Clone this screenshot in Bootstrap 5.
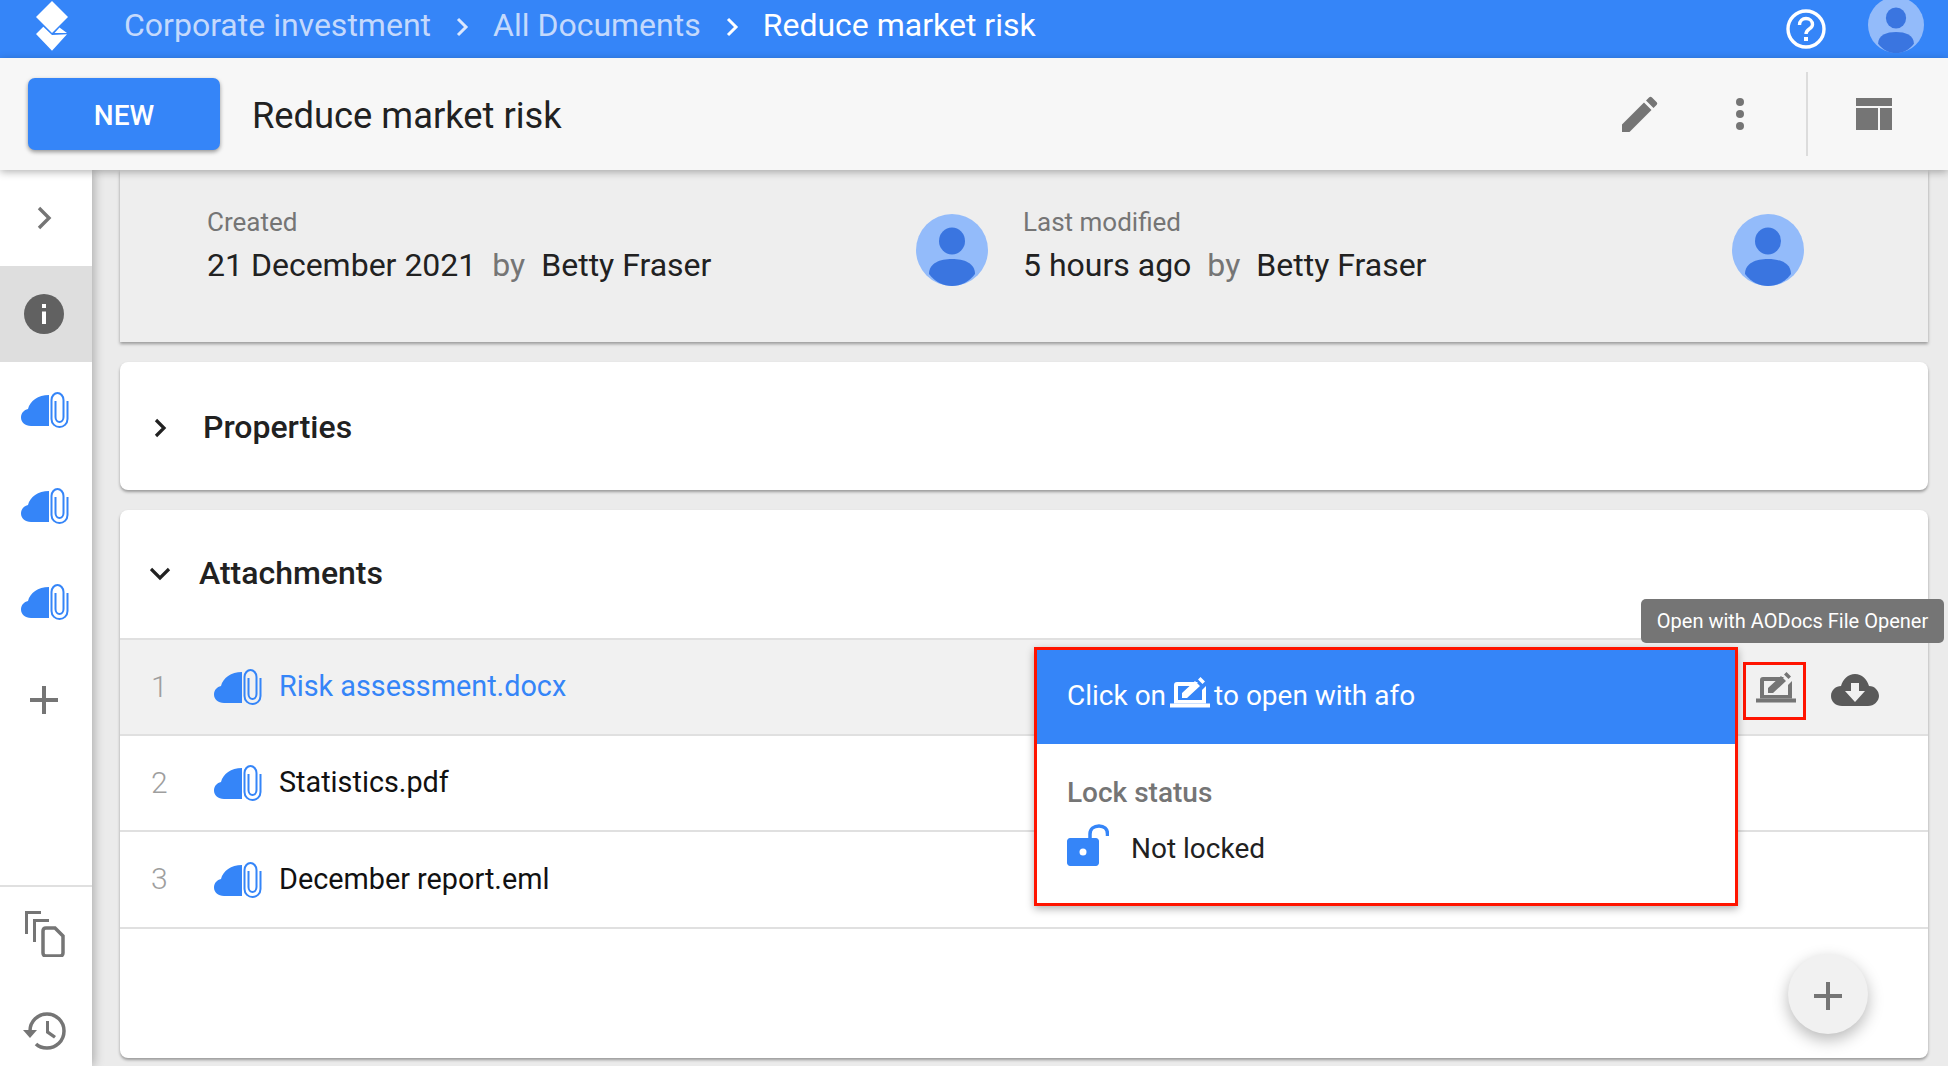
<!DOCTYPE html>
<html lang="en"><head><meta charset="utf-8"><title>Reduce market risk</title>
<link rel="stylesheet" href="https://cdn.jsdelivr.net/npm/bootstrap@5.3.0/dist/css/bootstrap.min.css">
<style>
html,body{height:100%;overflow:hidden}
body{font-family:Roboto,"Liberation Sans",sans-serif;background:#ebebeb;color:#212121}
.app-top{height:58px;background:#3585f8;color:#fff;font-size:32px;padding-left:35px}
.crumb-txt{margin-bottom:8px}
.crumb-dim{color:#c4d9fc}
.crumb-sep{width:14px;height:22px;margin:0 24px 5px 24px;flex:none}
.top-logo{width:34px;height:58px;margin-right:55px}
.top-help{width:40px;height:40px;margin-right:42px}
.top-user{width:56px;height:56px;margin-right:24px;margin-top:-8px}
.app-bar{height:112px;background:#f7f7f7;box-shadow:0 2px 8px rgba(0,0,0,.3);position:relative;z-index:3;padding-left:28px}
.new-btn{width:192px;height:72px;background:#3585f8;color:#fff;font-size:28px;font-weight:500;border:0;border-radius:7px;box-shadow:0 2px 4px rgba(0,0,0,.4);margin-right:32px;padding-top:10px}
.new-btn:hover{background:#3585f8;color:#fff}
.bar-title{font-size:36.300px;margin-top:4px}
.bar-ico{fill:#757575;flex:none}
.bar-sep{width:2px;height:84px;background:#dcdcdc;margin:0 48px 0 62px}
.app-side{width:92px;background:#fff;box-shadow:2px 0 10px rgba(0,0,0,.28);position:relative;z-index:2;flex:none}
.side-cell{height:96px;padding-right:4px}
.side-on{background:#dedede}
.side-top{height:96px;padding-right:2px}
.side-foot{border-top:2px solid #e0e0e0;height:181px;padding-right:2px}
.side-plus{margin-top:3px}
.app-main{padding:0 20px 0 28px;min-width:0}
.meta-card{height:172px;background:#eee;box-shadow:0 2px 3px rgba(0,0,0,.35);padding:0 0 0 87px;margin-bottom:20px}
.meta-cell{width:816px;position:relative;padding-top:35px}
.meta-label{font-size:26px;color:#757575;line-height:34px}
.meta-val{font-size:32px;line-height:42px;margin-top:5px}
.meta-by{color:#757575;margin:0 16px}
.meta-av{width:72px;height:72px;position:absolute;top:44px;left:709px}
.sheet{background:#fff;border-radius:8px;box-shadow:0 2px 3px rgba(0,0,0,.35)}
.props-sheet{height:128px;padding-left:34px;margin-bottom:20px}
.sheet-h{font-size:32px;font-weight:500}
.att-sheet{height:548px;position:relative}
.att-head{height:128px;padding-left:30px}
.att-row{height:96px;border-top:2px solid #e0e0e0;padding-left:31px;font-size:28.800px;color:#111}
.att-row.last-r{border-bottom:2px solid #e0e0e0;height:99px}
.att-on{background:#f1f1f1}
.att-num{width:62px;font-size:30px;font-weight:300;color:#9e9e9e;margin-bottom:2px}
.att-ico{width:49px;height:36px;margin-right:17px;flex:none}
.att-link{color:#3585f8}
.tip-box{position:absolute;left:1521px;top:89px;width:303px;height:44px;background:#757575;color:#fff;font-size:20px;border-radius:5px;z-index:5}
.pop-box{position:absolute;left:914px;top:137px;width:704px;height:259px;background:#fff;border:3px solid #ff1400;box-shadow:0 3px 8px rgba(0,0,0,.3);z-index:4}
.pop-head{height:94px;background:#3585f8;color:#fff;font-size:28px;padding:0 0 2px 30px}
.pop-ico{width:40px;height:32px;margin:-6px 4px 0;fill:#fff}
.pop-body{padding:31px 30px 0}
.pop-lab{font-size:28px;font-weight:500;color:#757575;line-height:36px}
.pop-val{font-size:28px;margin-top:17px;color:#212121}
.pop-lock{width:42px;height:42px;margin:-8px 22px 0 0}
.open-box{position:absolute;left:1623px;top:152px;width:63px;height:58px;border:3px solid #ff1400}
.open-ico{position:absolute;left:1636px;top:162px;width:40px;height:32px}
.down-ico{position:absolute;left:1711px;top:163px;width:48px;height:34px}
.fab-btn{position:absolute;left:1668px;top:444px;width:80px;height:80px;border-radius:50%;background:#f1f1f1;box-shadow:0 6px 16px rgba(0,0,0,.28)}
.fab-plus{margin-top:3px}
</style></head><body>
<svg width="0" height="0" class="position-absolute">
<symbol id="i-att" viewBox="0 0 49 36">
<path fill="#3585f8" d="M29 34H11C5 34 1 30 1 25.500C1 21 4 18 8 17C10 9 18 3 29 3Z"/>
<path fill="none" stroke="#3585f8" stroke-width="2" d="M47.500 9V27C47.500 32 43.500 35 39.500 35S31.500 32 31.500 27V8C31.500 4 34.500 1 37.500 1S43.500 4 43.500 8V25C43.500 28 41.500 30 39.500 30S35.500 28 35.500 25V9"/>
</symbol>
<symbol id="i-av" viewBox="0 0 72 72">
<circle cx="36" cy="36" r="36" fill="#93bbfa"/>
<ellipse cx="36" cy="27" rx="13" ry="13.500" fill="#3a75e0"/>
<path fill="#3a75e0" d="M13 60C13 49 24 45 36 45S59 49 59 60C53 68 45 72 36 72S19 68 13 60Z"/>
</symbol>
<symbol id="i-plus" viewBox="0 0 28 28"><path fill="#757575" d="M12 0h4v12h12v4H16v12h-4V16H0v-4h12z"/></symbol>
<symbol id="i-open" viewBox="0 0 40 32">
<path d="M0 26.500h40v4H0z"/>
<path d="M7 5H28L24 9H8V23H32V13L36 9V26.500H4V8C4 6 5 5 7 5Z"/>
<path d="M12 21v-5L25 4l5 5-13 12zM28 2.500 30.500 0 35 4.500 32.500 7z"/>
</symbol>
</svg>

<header class="app-top d-flex align-items-center">
<svg class="top-logo flex-none" viewBox="0 0 34 58"><path fill="#fff" d="M17 1 33 17 17 33 1 17ZM1 34 8.300 26.700 17 35 32 34.300 17 50.700ZM24.500 27.500 32 33H19.500Z"/></svg>
<span class="crumb-dim crumb-txt">Corporate investment</span>
<svg class="crumb-sep" viewBox="0 0 14 22"><path fill="none" stroke="#dbe8fe" stroke-width="3" d="M3 3l8 8-8 8"/></svg>
<span class="crumb-dim crumb-txt">All Documents</span>
<svg class="crumb-sep" viewBox="0 0 14 22"><path fill="none" stroke="#fff" stroke-width="3" d="M3 3l8 8-8 8"/></svg>
<span class="crumb-txt">Reduce market risk</span>
<span class="ms-auto d-flex align-items-center">
<svg class="top-help" viewBox="0 0 40 40"><circle cx="20" cy="20" r="18" fill="none" stroke="#fff" stroke-width="3.400"/><path fill="none" stroke="#fff" stroke-width="3.400" d="M13.500 16c0-4 3-6.500 6.500-6.500s6.500 2.500 6.500 6c0 4.500-6.500 4.500-6.500 9.500"/><path fill="#fff" d="M18 28h4v4h-4z"/></svg>
<svg class="top-user"><use href="#i-av"/></svg>
</span>
</header>

<div class="app-bar d-flex align-items-center">
<button class="btn new-btn" type="button">NEW</button>
<span class="bar-title">Reduce market risk</span>
<span class="ms-auto d-flex align-items-center">
<svg class="bar-ico" width="36" height="36" viewBox="0 0 36 36"><path d="M0 28.500 22 6.500l7.500 7.500L7.500 36H0zM24 4.500l3-3c1-1 2-1 3 0l4.500 4.500c1 1 1 2 0 3l-3 3z"/></svg>
<svg class="bar-ico" style="margin-left:78px" width="8" height="32" viewBox="0 0 8 32"><circle cx="4" cy="4" r="4"/><circle cx="4" cy="16" r="4"/><circle cx="4" cy="28" r="4"/></svg>
<span class="bar-sep"></span>
<svg class="bar-ico" style="margin-right:56px" width="36" height="32" viewBox="0 0 36 32"><path d="M0 0h36v8H0zM0 10h22v22H0zM24 10h12v22H24z"/></svg>
</span>
</div>

<div class="d-flex flex-grow-1" style="height:896px">
<aside class="app-side d-flex flex-column">
<div class="side-top d-flex align-items-center justify-content-center"><svg width="18" height="24" viewBox="0 0 18 24"><path fill="none" stroke="#757575" stroke-width="3.400" d="M3 2l10 10L3 22"/></svg></div>
<div class="side-cell side-on d-flex align-items-center justify-content-center"><svg width="40" height="40" viewBox="0 0 40 40"><circle cx="20" cy="20" r="20" fill="#616161"/><path fill="#fff" d="M18 17.500h4V30h-4zM18 10h4v4h-4z"/></svg></div>
<div class="side-cell d-flex align-items-center justify-content-center"><svg width="49" height="36"><use href="#i-att"/></svg></div>
<div class="side-cell d-flex align-items-center justify-content-center"><svg width="49" height="36"><use href="#i-att"/></svg></div>
<div class="side-cell d-flex align-items-center justify-content-center"><svg width="49" height="36"><use href="#i-att"/></svg></div>
<div class="side-cell d-flex align-items-center justify-content-center"><svg class="side-plus" width="28" height="28"><use href="#i-plus"/></svg></div>
<div class="side-foot mt-auto d-flex flex-column align-items-center">
<svg class="bar-ico" style="margin-top:24px" width="40" height="46" viewBox="0 0 40 46"><path d="M0 0h16v3H3v20H0z"/><path d="M8 8h16v3H11v20H8z"/><path fill="none" stroke="#757575" stroke-width="3.500" d="M18 20c0-2 1-3 3-3h9l8 8v17c0 2-1 3-3 3H21c-2 0-3-1-3-3z"/></svg>
<svg class="bar-ico" style="margin-top:55px" width="44" height="38" viewBox="0 0 44 38"><path fill="none" stroke="#757575" stroke-width="3.500" d="M7 19C7 9 15 2 24 2s17 7 17 17-8 17-17 17c-4 0-8-1-11-4"/><path d="M0 18h14l-7 8zM23 9h3v10l7 5-2 2.500-8-5.500z"/></svg>
</div>
</aside>
<main class="app-main flex-grow-1">
<section class="meta-card d-flex">
<div class="meta-cell"><div class="meta-label">Created</div><div class="meta-val">21 December 2021<span class="meta-by">by</span>Betty Fraser</div><svg class="meta-av"><use href="#i-av"/></svg></div>
<div class="meta-cell"><div class="meta-label">Last modified</div><div class="meta-val">5 hours ago<span class="meta-by">by</span>Betty Fraser</div><svg class="meta-av"><use href="#i-av"/></svg></div>
</section>
<section class="sheet props-sheet d-flex align-items-center">
<svg class="mt-1" width="18" height="24" viewBox="0 0 18 24"><path fill="none" stroke="#212121" stroke-width="3.200" d="M2 4l8 8-8 8"/></svg>
<span class="sheet-h" style="margin:1px 0 0 31px">Properties</span>
</section>
<section class="sheet att-sheet">
<div class="att-head d-flex align-items-center">
<svg width="24" height="16" viewBox="0 0 24 16"><path fill="none" stroke="#212121" stroke-width="3.200" d="M1 3l9 9 9-9"/></svg>
<span class="sheet-h" style="margin:0 0 2px 25px">Attachments</span>
</div>
<div class="att-row att-on d-flex align-items-center"><span class="att-num">1</span><svg class="att-ico"><use href="#i-att"/></svg><span class="att-link">Risk assessment.docx</span></div>
<div class="att-row d-flex align-items-center"><span class="att-num">2</span><svg class="att-ico"><use href="#i-att"/></svg><span>Statistics.pdf</span></div>
<div class="att-row last-r d-flex align-items-center"><span class="att-num">3</span><svg class="att-ico"><use href="#i-att"/></svg><span>December report.eml</span></div>
<div class="tip-box d-flex align-items-center justify-content-center">Open with AODocs File Opener</div>
<div class="pop-box">
<div class="pop-head d-flex align-items-center">Click on<svg class="pop-ico"><use href="#i-open"/></svg>to open with afo</div>
<div class="pop-body"><div class="pop-lab">Lock status</div>
<div class="pop-val d-flex align-items-center"><svg class="pop-lock" viewBox="0 0 42 42"><path fill="#3585f8" d="M3 14h26c1.500 0 3 1.500 3 3v22c0 1.500-1.500 3-3 3H3c-1.500 0-3-1.500-3-3V17c0-1.500 1.500-3 3-3z"/><circle cx="16" cy="28" r="3.500" fill="#fff"/><path fill="none" stroke="#3585f8" stroke-width="3.500" d="M23 14V10C23 5 27 2 32 2S40.500 5 40.500 10V12"/></svg>Not locked</div></div>
</div>
<div class="open-box"></div>
<svg class="open-ico bar-ico"><use href="#i-open"/></svg>
<svg class="down-ico" viewBox="0 0 48 34"><path fill="#5a5a5a" d="M11 33C5 33 0 29 0 23S5 13 10 13C12 6 17 1 24 1S36 6 38 13C44 13 48 18 48 23S43 33 37 33Z"/><path fill="#f1f1f1" d="M20 10h8v8h6L24 29 14 18h6z"/></svg>
<div class="fab-btn d-flex align-items-center justify-content-center"><svg class="fab-plus" width="28" height="28"><use href="#i-plus"/></svg></div>
</section>
</main>
</div>
</body></html>
